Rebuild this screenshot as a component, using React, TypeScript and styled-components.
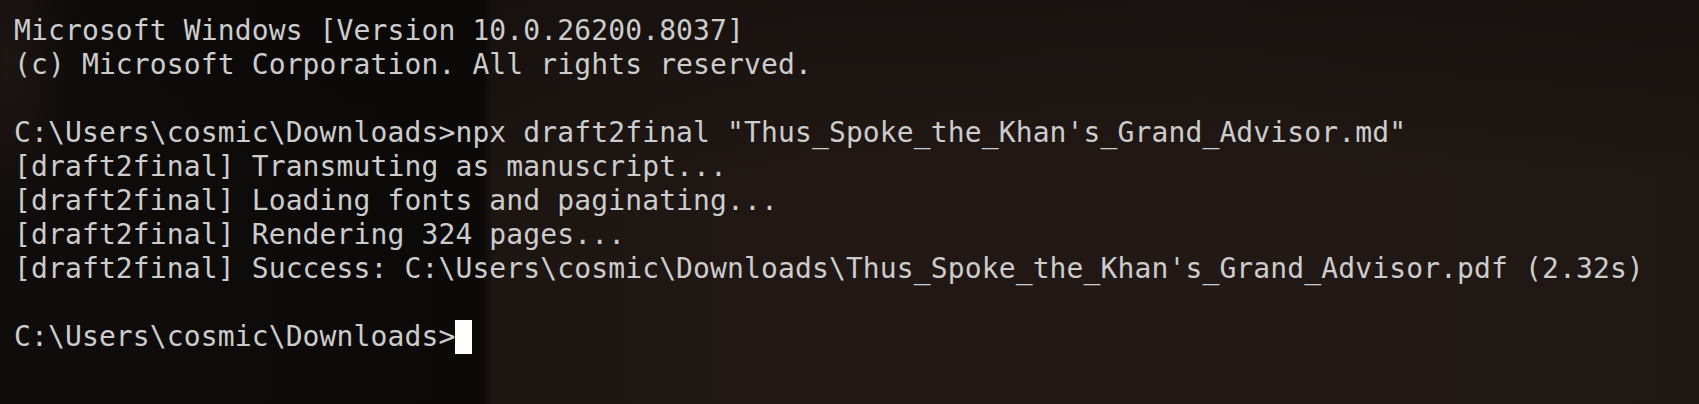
import styled, { createGlobalStyle } from 'styled-components';

// ----------------------------------------------------------------------

const GlobalStyle = createGlobalStyle`
  html,
  body {
    margin: 0;
    padding: 0;
    background: #0d0b0a;
  }

  body {
    overflow: hidden;
  }
`;

const Terminal = styled.div`
  position: relative;
  overflow: hidden;
  width: 1699px;
  height: 404px;
  box-sizing: border-box;
  padding: 14px 0 0 14px;

  background:
    radial-gradient(ellipse 70px 190px at 10px 60px, rgba(40, 30, 26, 0.55), rgba(40, 30, 26, 0) 100%),
    linear-gradient(180deg, rgba(10, 8, 7, 0.35) 0, rgba(10, 8, 7, 0) 45%),
    linear-gradient(
      90deg,
      #0f0c0b 0,
      #0d0b0a 300px,
      #0c0a09 484px,
      #1c1512 492px,
      #211815 800px,
      #221916 1200px,
      #1f1714 1699px
    );

  font-family: 'DejaVu Sans Mono', 'Liberation Mono', monospace;
  font-size: 28px;
  letter-spacing: 0.12px;
  color: #cccccc;
`;

const Line = styled.div`
  height: 34px;
  line-height: 34px;
  white-space: pre;
`;

const Cursor = styled.span`
  display: inline-block;
  width: 17px;
  height: 34px;
  vertical-align: top;
  background: #ffffff;
`;

const prompt = 'C:\\Users\\cosmic\\Downloads>';

const lines = [
  'Microsoft Windows [Version 10.0.26200.8037]',
  '(c) Microsoft Corporation. All rights reserved.',
  '',
  `${prompt}npx draft2final "Thus_Spoke_the_Khan's_Grand_Advisor.md"`,
  '[draft2final] Transmuting as manuscript...',
  '[draft2final] Loading fonts and paginating...',
  '[draft2final] Rendering 324 pages...',
  "[draft2final] Success: C:\\Users\\cosmic\\Downloads\\Thus_Spoke_the_Khan's_Grand_Advisor.pdf (2.32s)",
  '',
];

export default function App() {
  return (
    <>
      <GlobalStyle />
      <Terminal>
        {lines.map((text, i) => (
          <Line key={i}>{text}</Line>
        ))}
        <Line>
          {prompt}
          <Cursor />
        </Line>
      </Terminal>
    </>
  );
}
